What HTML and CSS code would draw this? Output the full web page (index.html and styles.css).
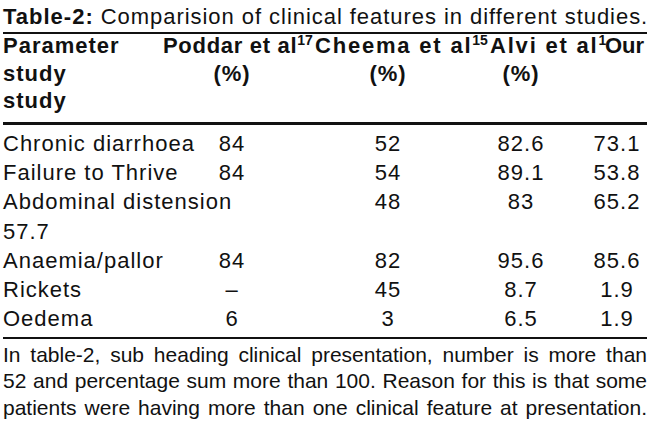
FILE: index.html
```html
<!DOCTYPE html>
<html>
<head>
<meta charset="utf-8">
<link rel="stylesheet" href="styles.css">
</head>
<body>
<div class="page">
  <div class="title"><b>Table-2:</b> Comparision of clinical features in different studies.</div>
  <div class="head">
    <div class="head-top">
      <span>Parameter</span>
      <span class="h-poddar">Poddar et al<sup>17</sup></span>
      <span class="h-wide">Cheema et al<sup>15</sup></span>
      <span class="h-wide">Alvi et al<sup>1</sup></span>
      <span class="h-our">Our</span>
    </div>
    <div class="grid">
      <span class="c1">study</span><span>(%)</span><span>(%)</span><span>(%)</span><span class="c5"></span>
      <span class="c1">study</span><span></span><span></span><span></span><span class="c5"></span>
    </div>
  </div>
  <div class="body grid">
    <span class="c1">Chronic diarrhoea</span><span>84</span><span>52</span><span>82.6</span><span class="c5">73.1</span>
    <span class="c1">Failure to Thrive</span><span>84</span><span>54</span><span>89.1</span><span class="c5">53.8</span>
    <span class="c1 span2">Abdominal distension<br>57.7</span><span>48</span><span>83</span><span class="c5">65.2</span>
    <span class="c1">Anaemia/pallor</span><span>84</span><span>82</span><span>95.6</span><span class="c5">85.6</span>
    <span class="c1">Rickets</span><span>–</span><span>45</span><span>8.7</span><span class="c5">1.9</span>
    <span class="c1">Oedema</span><span>6</span><span>3</span><span>6.5</span><span class="c5">1.9</span>
  </div>
  <p class="note">
    <span class="ln">In table-2, sub heading clinical presentation, number is more than</span>
    <span class="ln">52 and percentage sum more than 100. Reason for this is that some</span>
    <span class="ln">patients were having more than one clinical feature at presentation.</span>
  </p>
</div>
</body>
</html>
```
FILE: styles.css
```css
html, body {
  margin: 0;
  padding: 0;
  background: #fff;
}
body {
  font-family: "Liberation Sans", Arial, sans-serif;
  color: #111;
}
.page {
  width: 644px;
  padding-left: 3px;
}
.title {
  font-size: 22px;
  line-height: 26px;
  padding-top: 4px;
  padding-bottom: 2px;
  border-bottom: 2px solid #111;
  white-space: nowrap;
  letter-spacing: 0.95px;
}
.title b {
  letter-spacing: 1px;
}
.head {
  font-weight: bold;
  font-size: 22px;
  line-height: 27.5px;
  letter-spacing: 1px;
  margin-top: -2px;
  padding-bottom: 7px;
  border-bottom: 3px solid #111;
}
.head-top {
  display: grid;
  grid-template-columns: 160px 152px 175px 115px 1fr;
  white-space: nowrap;
}
.h-poddar {
  letter-spacing: 0.7px;
}
.h-wide {
  letter-spacing: 1.8px;
}
.h-our {
  letter-spacing: 0;
}
sup {
  font-size: 14px;
  line-height: 0;
  vertical-align: 8px;
  letter-spacing: 0;
}
.grid {
  display: grid;
  grid-template-columns: 169px 120px 192px 74px 89px;
  text-align: center;
  white-space: nowrap;
}
.grid .c1 {
  text-align: left;
}
.grid .c5 {
  padding-left: 29px;
}
.span2 {
  grid-column: 1 / span 2;
}
.body {
  font-size: 22px;
  line-height: 29.2px;
  letter-spacing: 1px;
  padding-top: 4.5px;
  padding-bottom: 4px;
  border-bottom: 2.5px solid #111;
}
.note {
  margin: 0;
  padding-top: 2.5px;
  font-size: 21px;
  line-height: 26.5px;
}
.ln {
  display: block;
  text-align: justify;
  text-align-last: justify;
  white-space: nowrap;
}
```
